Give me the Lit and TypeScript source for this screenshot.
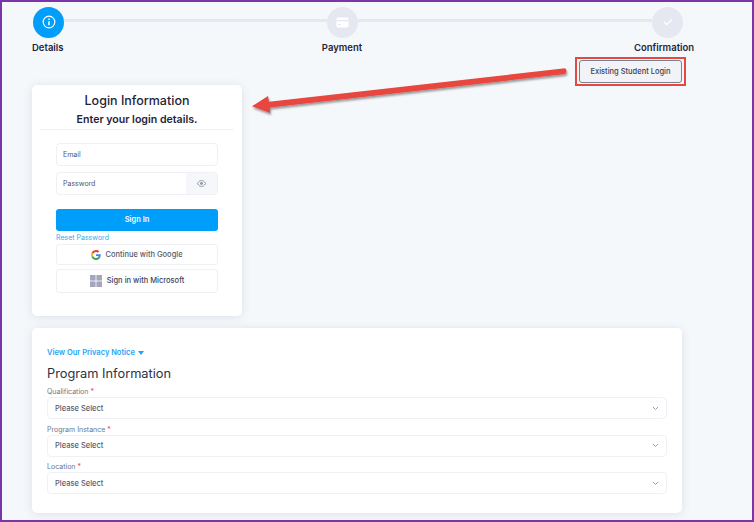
import { LitElement, html, css } from "lit";
import { customElement } from "lit/decorators.js";

@customElement("app-root")
export class AppRoot extends LitElement {
  static styles = css`
    :host {
      display: block;
      position: relative;
      width: 754px;
      height: 522px;
      box-sizing: border-box;
      border: 2px solid #7a35a8;
      background: #f5f8fb;
      overflow: hidden;
      font-family: Inter, "Open Sans", "Liberation Sans", sans-serif;
      color: #343a4e;
    }
    .page { padding: 5px 0 0 30px; width: 665px; display: flex; flex-direction: column; }
    .track { display: flex; align-items: center; width: 650px; margin-left: 1px; height: 30px; }
    .circle { width: 31px; height: 31px; flex: none; border-radius: 50%; background: #e5e8f0; display: flex; align-items: center; justify-content: center; }
    .circle.on { background: #009efb; }
    .bar { height: 3px; background: #e5e8f0; margin-top: -3px; }
    .bar.a { flex: 263; }
    .bar.b { flex: 293; }
    .labels { display: grid; grid-template-columns: 268px 84px 237px 86px; height: 14px; margin-top: 4px; font-size: 9.5px; font-weight: 600; line-height: 14px; color: #1f2438; }
    .labels .mid { grid-column: 2; text-align: center; }
    .labels .end { grid-column: 4; text-align: center; }
    .actions { display: flex; justify-content: flex-end; width: 654px; margin-top: 2px; }
    .mark { border: 2px solid #e8473f; padding: 1px 2px; display: flex; box-sizing: border-box; width: 111px; height: 29px; }
    .existing { flex: 1; border: 1px solid #7b8090; border-radius: 3px; background: #f1f3f6; font: 500 7.5px/1 Inter, "Liberation Sans", sans-serif; color: #3b4256; padding: 0; }
    .card { background: #fff; border-radius: 5px; box-shadow: 0 1px 10px rgba(40, 50, 70, 0.12); box-sizing: border-box; }
    .login { width: 210px; height: 231px; margin-top: -1px; padding: 9px 8px 0; }
    .login h2 { margin: 0; text-align: center; font-size: 12.5px; line-height: 14px; font-weight: 500; color: #1f2438; }
    .login h3 { margin: 4px 0 0; text-align: center; font-size: 10.6px; line-height: 15px; font-weight: 600; color: #1f2438; }
    .rule { height: 1px; background: #f2f3f6; margin-top: 2px; }
    .form { padding: 13px 16px 0; display: flex; flex-direction: column; }
    .field { height: 23px; box-sizing: border-box; border: 1px solid #eff0f6; border-radius: 4px; display: flex; align-items: center; padding-left: 6px; font-size: 7px; color: #50566b; background: #fff; overflow: hidden; }
    .field + .field { margin-top: 6px; }
    .field span { flex: 1; }
    .addon { width: 31px; align-self: stretch; background: #f5f7fa; display: flex; align-items: center; justify-content: center; }
    .signin { margin-top: 14px; height: 22px; border: 0; border-radius: 3px; background: #009efb; color: #fff; font: 600 7.5px/1 Inter, "Liberation Sans", sans-serif; padding: 0; }
    .reset { font-size: 7px; line-height: 13px; height: 13px; color: #36a9f5; text-decoration: none; }
    .social { height: 21px; box-sizing: border-box; border: 1px solid #eff0f6; border-radius: 3px; background: #fff; display: flex; align-items: center; justify-content: center; gap: 4px; font: 500 7.5px/1 Inter, "Liberation Sans", sans-serif; color: #555a6c; padding: 0; }
    .social.ms { height: 24px; margin-top: 4px; color: #3e4358; gap: 5px; }
    .program { width: 650px; height: 185px; margin-top: 12px; padding: 20px 15px 0; }
    .notice { display: flex; align-items: center; gap: 3px; font-size: 7.5px; line-height: 10px; font-weight: 600; color: #1ea4f8; }
    .notice i { width: 0; height: 0; border: 3.5px solid transparent; border-top: 4px solid #1ea4f8; border-bottom: 0; }
    .program h2 { margin: 6px 0 0; font-size: 12.8px; line-height: 20px; font-weight: 400; color: #2c3145; }
    .group label { display: block; font-size: 7px; line-height: 9px; color: #70758a; }
    .group label b { color: #ee3f5f; font-weight: 400; }
    .group { margin-top: 5.5px; }
    .program h2 + .group { margin-top: 3px; }
    .select { margin-top: 1px; width: 620px; height: 22px; box-sizing: border-box; border: 1px solid #f0f1f7; border-radius: 4px; display: flex; align-items: center; justify-content: space-between; padding: 0 7px; font-size: 7.5px; font-weight: 500; color: #565b70; }
    .arrow { position: absolute; left: -2px; top: -2px; width: 754px; height: 522px; pointer-events: none; overflow: visible; }
  `;

  private select(label: string) {
    return html`<div class="group">
      <label>${label} <b>*</b></label>
      <div class="select">
        <span>Please Select</span>
        <svg width="7" height="5" viewBox="0 0 7 5"><path d="M1 1 3.500 3.500 6 1" fill="none" stroke="#9a9eb6" stroke-width="1"/></svg>
      </div>
    </div>`;
  }

  render() {
    return html`
      <div class="page">
        <div class="track">
          <div class="circle on">
            <svg width="14" height="14" viewBox="0 0 14 14" fill="none" stroke="#fff" stroke-width="1.2"><circle cx="7" cy="7" r="5.8"/><path d="M7 6.2V10.2" stroke-width="1.5"/><path d="M7 3.6V5" stroke-width="1.5"/></svg>
          </div>
          <div class="bar a"></div>
          <div class="circle">
            <svg width="13" height="11" viewBox="0 0 13 11"><rect x="0.5" y="0.5" width="12" height="10" rx="1.5" fill="#fff"/><rect x="0.5" y="3" width="12" height="1.3" fill="#e5e8f0"/><rect x="2" y="7" width="3" height="1" fill="#e5e8f0"/></svg>
          </div>
          <div class="bar b"></div>
          <div class="circle">
            <svg width="10" height="8" viewBox="0 0 10 8"><path d="M1 4 3.800 6.600 9 1.200" fill="none" stroke="#fff" stroke-width="1.3"/></svg>
          </div>
        </div>
        <div class="labels"><span>Details</span><span class="mid">Payment</span><span class="end">Confirmation</span></div>
        <div class="actions">
          <div class="mark"><button class="existing">Existing Student Login</button></div>
        </div>
        <section class="card login">
          <h2>Login Information</h2>
          <h3>Enter your login details.</h3>
          <div class="rule"></div>
          <div class="form">
            <div class="field"><span>Email</span></div>
            <div class="field">
              <span>Password</span>
              <div class="addon">
                <svg width="9" height="7" viewBox="0 0 9 7"><path d="M.5 3.500C2 1 3 .6 4.500 .6S7 1 8.500 3.500C7 6 6 6.400 4.500 6.400S2 6 .5 3.500Z" fill="none" stroke="#8f94a6"/><circle cx="4.500" cy="3.500" r="1.400" fill="#8f94a6"/></svg>
              </div>
            </div>
            <button class="signin">Sign In</button>
            <a class="reset">Reset Password</a>
            <button class="social">
              <svg width="10" height="10" viewBox="0 0 48 48">
                <path fill="#EA4335" d="M24 9.500c3.500 0 6.700 1.200 9.200 3.600l6.900-6.900C35.900 2.400 30.500 0 24 0 14.600 0 6.500 5.400 2.600 13.200l8 6.200C12.500 13.700 17.800 9.500 24 9.500z"/>
                <path fill="#4285F4" d="M46.900 24.500c0-1.600-.1-3.100-.4-4.500H24v9h12.900c-.6 3-2.200 5.500-4.700 7.200l7.700 6c4.500-4.200 7-10.300 7-17.700z"/>
                <path fill="#FBBC05" d="M10.500 28.600c-.5-1.400-.8-3-.8-4.600s.3-3.200.8-4.600l-8-6.200C.9 16.500 0 20.100 0 24s.9 7.500 2.600 10.800l7.900-6.200z"/>
                <path fill="#34A853" d="M24 48c6.500 0 11.900-2.100 15.900-5.800l-7.700-6c-2.200 1.500-4.900 2.300-8.200 2.300-6.200 0-11.500-4.200-13.400-9.900l-8 6.200C6.500 42.600 14.600 48 24 48z"/>
              </svg>
              Continue with Google
            </button>
            <button class="social ms">
              <svg width="12" height="12" viewBox="0 0 12 12" fill="#a3a6bd"><rect width="5.600" height="5.600"/><rect x="6.400" width="5.600" height="5.600"/><rect y="6.400" width="5.600" height="5.600"/><rect x="6.400" y="6.400" width="5.600" height="5.600"/></svg>
              Sign in with Microsoft
            </button>
          </div>
        </section>
        <section class="card program">
          <div class="notice">View Our Privacy Notice <i></i></div>
          <h2>Program Information</h2>
          ${this.select("Qualification")}
          ${this.select("Program Instance")}
          ${this.select("Location")}
        </section>
      </div>
      <svg class="arrow" viewBox="0 0 754 522">
        <defs><filter id="s" x="-5%" y="-30%" width="110%" height="160%"><feDropShadow dx="1" dy="2" stdDeviation="1" flood-color="#000" flood-opacity="0.4"/></filter></defs>
        <g filter="url(#s)" fill="#e8473f">
          <path d="M565 68.300 Q568 71 565 74 L270 107.500 L270 113 L252 106.300 L268 96 L269 101.800 Z"/>
        </g>
      </svg>
    `;
  }
}
